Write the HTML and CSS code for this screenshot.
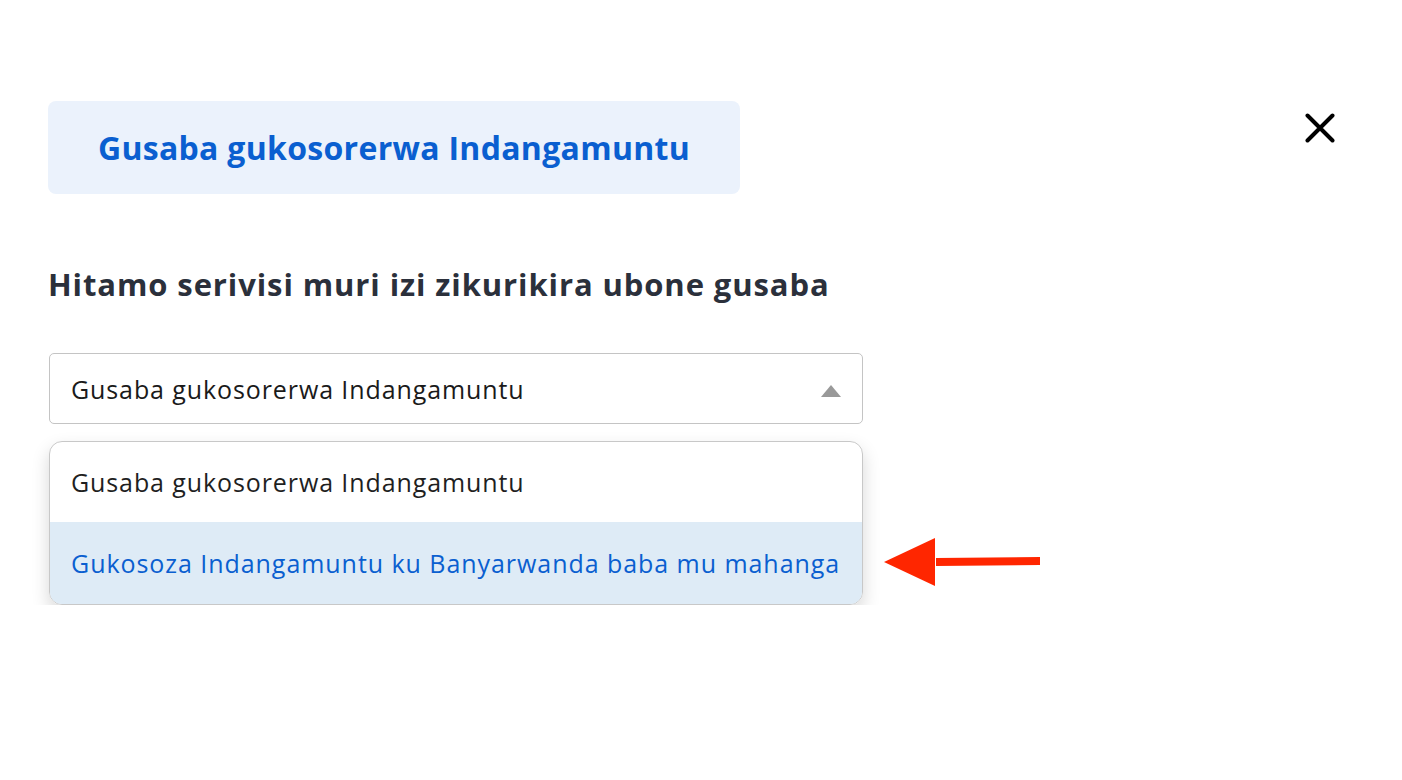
FILE: index.html
```html
<!DOCTYPE html>
<html>
<head>
<meta charset="utf-8">
<link rel="stylesheet" href="styles.css">
</head>
<body>
<div class="page">
  <div class="top">
    <div class="tab">Gusaba gukosorerwa Indangamuntu</div>
    <button class="close" aria-label="close">
      <svg width="30" height="30" viewBox="0 0 30 30"><path d="M2.5 2.5 L27.5 27.5 M27.5 2.5 L2.5 27.5" stroke="#000" stroke-width="4" stroke-linecap="round"/></svg>
    </button>
  </div>
  <h2 class="heading">Hitamo serivisi muri izi zikurikira ubone gusaba</h2>
  <div class="field">
    <div class="select">
      <span>Gusaba gukosorerwa Indangamuntu</span>
      <svg class="caret" width="20" height="12" viewBox="0 0 20 12"><path d="M0 12 L10 0 L20 12 Z" fill="#999"/></svg>
    </div>
    <div class="menu-row">
      <ul class="menu">
        <li class="opt">Gusaba gukosorerwa Indangamuntu</li>
        <li class="opt active">Gukosoza Indangamuntu ku Banyarwanda baba mu mahanga</li>
      </ul>
      <svg class="pointer" width="160" height="52" viewBox="0 0 160 52"><path d="M52 22 L156 21 L156 29 L52 30 Z" fill="#ff2600"/><path d="M0 26 L51 2 L51 50 Z" fill="#ff2600"/></svg>
    </div>
  </div>
</div>
</body>
</html>
```
FILE: styles.css
```css
* { box-sizing: border-box; }
html, body { margin: 0; padding: 0; background: #fff; }
body { font-family: "Open Sans", Lato, sans-serif; }
.page { padding: 101px 48px 0 48px; }
.top { display: flex; justify-content: space-between; align-items: flex-start; }
.tab {
  width: 692px; height: 93px;
  background: #ebf2fc; border-radius: 8px;
  display: flex; align-items: center; justify-content: center;
  color: #0a5fd0; font-weight: 700; font-size: 32px; letter-spacing: 0.3px;
}
.close { border: 0; background: none; padding: 0; margin: 12px 19px 0 0; width: 30px; height: 30px; }
.close svg { display: block; }
.heading {
  margin: 70px 0 0 0; font-size: 31px; font-weight: 700; color: #2b303b; line-height: 40px; letter-spacing: 0.9px;
}
.field { width: 814px; margin-top: 49px; margin-left: 1px; }
.select {
  height: 71px; border: 1px solid #c4c4c4; border-radius: 5px;
  display: flex; align-items: center; justify-content: space-between;
  padding: 0 21px 0 21px; font-size: 25px; color: #1a1a1a; letter-spacing: 0.9px;
}
.caret { margin-top: 4px; }
.menu-row { display: flex; align-items: flex-start; margin-top: 17px; width: 1000px; }
.menu {
  list-style: none; margin: 0; padding: 0; width: 814px; flex: none;
  border: 1px solid #c8c8c8; border-radius: 13px; overflow: hidden;
  box-shadow: 0 8px 18px rgba(0,0,0,0.16);
}
.opt { height: 80px; display: flex; align-items: center; padding-left: 21px; font-size: 25px; color: #1f1f1f; letter-spacing: 0.9px; }
.opt.active { background: #deebf6; color: #0a5fd0; height: 82px; letter-spacing: 0.95px; }
.pointer { margin-left: 21px; margin-top: 95px; }
```
